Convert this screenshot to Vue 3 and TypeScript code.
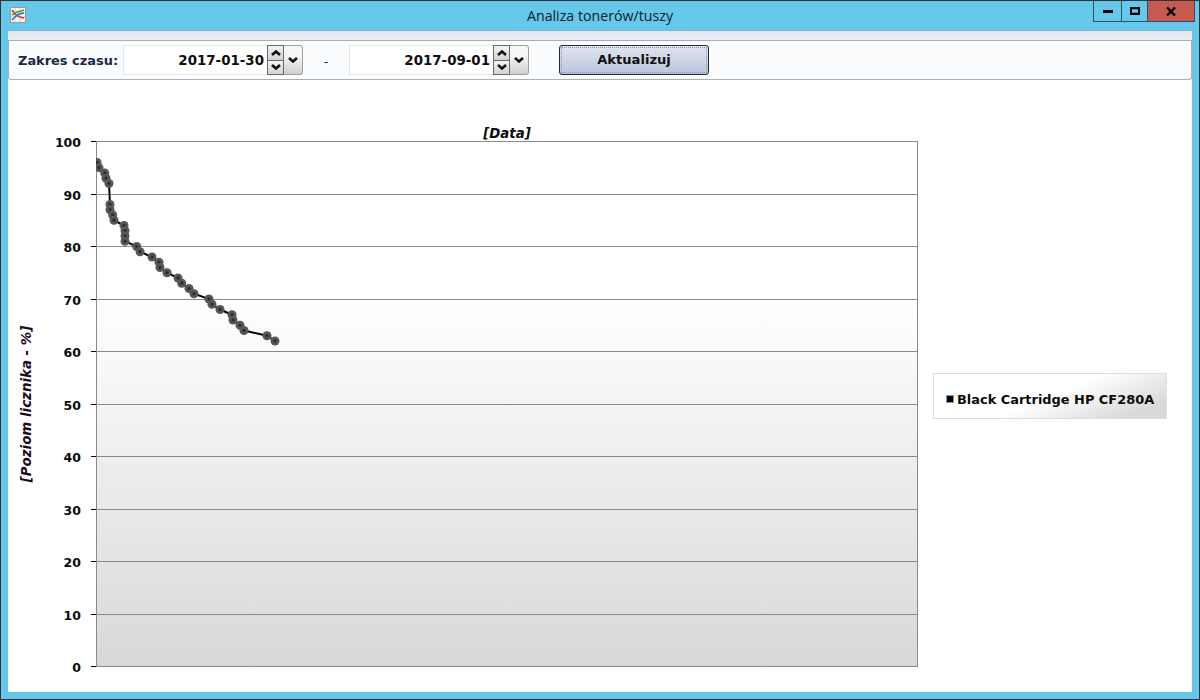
<script setup lang="ts">
const plot = { left: 96, right: 917, top: 141, bottom: 666 }
const ticks = [100, 90, 80, 70, 60, 50, 40, 30, 20, 10, 0]
const yOf = (v: number) => plot.bottom - ((plot.bottom - plot.top) * v) / 100
const gridY = (v: number) => Math.round(yOf(v)) + 0.5

const xs: [number, number][] = [
  [97, 96], [99, 95], [104.7, 94], [106, 93], [109, 92], [110, 88], [110, 87], [112.7, 86], [114, 85],
  [124, 84], [125, 83], [125, 82], [125, 81], [136.7, 80], [140, 79], [152, 78], [159, 77], [160, 76],
  [167, 75], [178, 74], [181.7, 73], [189, 72], [194, 71], [209, 70], [212, 69], [220, 68], [232, 67],
  [233, 66], [240, 65], [244, 64], [267, 63], [275, 62],
]
const points = xs.map(([x, v]) => ({ x, y: yOf(v) + 0.5 }))
const linePoints = points.map((p) => `${p.x},${p.y}`).join(' ')
</script>

<template>
  <div class="window">
    <header class="titlebar">
      <svg class="app-icon" width="16" height="16" viewBox="0 0 16 16">
        <rect x="0.5" y="0.5" width="15" height="15" fill="#f4f4f4" stroke="#9a9a9a" />
        <path d="M5 1v14M10 1v14M1 5h14M1 10h14" stroke="#d0d0d0" stroke-width="1" />
        <path d="M2 3l4 5 4 2 4 1" fill="none" stroke="#c8402c" stroke-width="1.500" />
        <path d="M2 8l5-3 4-1 3-1" fill="none" stroke="#5a9a30" stroke-width="1.500" />
        <path d="M2 13l3-3 4-3 5-1" fill="none" stroke="#2a70c0" stroke-width="1.500" />
      </svg>
      <span class="title">Analiza tonerów/tuszy</span>
      <div class="controls">
        <button class="ctl min" type="button">
          <svg width="10" height="3" viewBox="0 0 10 3"><rect width="10" height="3" fill="#000" /></svg>
        </button>
        <button class="ctl max" type="button">
          <svg width="10" height="8" viewBox="0 0 10 8"><path d="M0 0h10v8H0zM2 2.200v3.600h6V2.200z" fill="#000" fill-rule="evenodd" /></svg>
        </button>
        <button class="ctl close" type="button">
          <svg width="10" height="9" viewBox="0 0 10 9"><path d="M1 .5l8 8M9 .5l-8 8" stroke="#000" stroke-width="2.400" fill="none" /></svg>
        </button>
      </div>
    </header>

    <main class="content">
      <div class="band"></div>
      <div class="toolbar">
        <span class="label">Zakres czasu:</span>

        <div class="date">
          <div class="date-input">2017-01-30</div>
          <div class="spin">
            <span class="spin-btn">
              <svg width="10" height="6" viewBox="0 0 10 6"><path d="M1 5l4-3.500L9 5" fill="none" stroke="#111" stroke-width="2.600" /></svg>
            </span>
            <span class="spin-btn">
              <svg width="10" height="6" viewBox="0 0 10 6"><path d="M1 1l4 3.500L9 1" fill="none" stroke="#111" stroke-width="2.600" /></svg>
            </span>
          </div>
          <div class="drop">
            <svg width="10" height="6" viewBox="0 0 10 6"><path d="M1 1l4 3.500L9 1" fill="none" stroke="#111" stroke-width="2.600" /></svg>
          </div>
        </div>

        <span class="dash">-</span>

        <div class="date">
          <div class="date-input">2017-09-01</div>
          <div class="spin">
            <span class="spin-btn">
              <svg width="10" height="6" viewBox="0 0 10 6"><path d="M1 5l4-3.500L9 5" fill="none" stroke="#111" stroke-width="2.600" /></svg>
            </span>
            <span class="spin-btn">
              <svg width="10" height="6" viewBox="0 0 10 6"><path d="M1 1l4 3.500L9 1" fill="none" stroke="#111" stroke-width="2.600" /></svg>
            </span>
          </div>
          <div class="drop">
            <svg width="10" height="6" viewBox="0 0 10 6"><path d="M1 1l4 3.500L9 1" fill="none" stroke="#111" stroke-width="2.600" /></svg>
          </div>
        </div>

        <button class="update" type="button"><span class="update-inner">Aktualizuj</span></button>
      </div>

      <svg class="chart" width="1184" height="612" viewBox="8 80 1184 612">
        <defs>
          <linearGradient id="plotBg" x1="0" y1="0" x2="0" y2="1">
            <stop offset="0" stop-color="#ffffff" />
            <stop offset="0.3" stop-color="#ffffff" />
            <stop offset="1" stop-color="#d8d8d8" />
          </linearGradient>
          <linearGradient id="legendBg" x1="0" y1="0" x2="1" y2="1" gradientTransform="rotate(-20 .5 .5)">
            <stop offset="0" stop-color="#ffffff" />
            <stop offset="0.5" stop-color="#ffffff" />
            <stop offset="0.85" stop-color="#d9d9d9" />
            <stop offset="1" stop-color="#d9d9d9" />
          </linearGradient>
          <clipPath id="plotClip">
            <rect :x="plot.left" :y="plot.top" :width="plot.right - plot.left" :height="plot.bottom - plot.top" />
          </clipPath>
          <radialGradient id="dot">
            <stop offset="0" stop-color="#1c1c1c" />
            <stop offset="0.25" stop-color="#333" />
            <stop offset="0.5" stop-color="#575757" />
            <stop offset="1" stop-color="#575757" />
          </radialGradient>
        </defs>

        <rect :x="plot.left" :y="plot.top" :width="plot.right - plot.left" :height="plot.bottom - plot.top" fill="url(#plotBg)" />
        <g v-for="t in ticks" :key="t">
          <line :x1="plot.left" :x2="plot.right" :y1="gridY(t)" :y2="gridY(t)" class="grid" />
          <line :x1="plot.left - 5" :x2="plot.left" :y1="gridY(t)" :y2="gridY(t)" class="tick" />
          <text :x="plot.left - 15" :y="gridY(t) + 5.500" class="tick-label" text-anchor="end">{{ t }}</text>
        </g>
        <rect :x="plot.left + 0.5" :y="plot.top + 0.5" :width="plot.right - plot.left" :height="plot.bottom - plot.top" class="plot-frame" />

        <g clip-path="url(#plotClip)">
          <polyline :points="linePoints" class="series" />
          <circle v-for="(p, i) in points" :key="i" :cx="p.x" :cy="p.y" r="4.500" fill="url(#dot)" />
        </g>

        <text x="507" y="138" class="axis-title" text-anchor="middle">[Data]</text>
        <text x="0" y="0" class="axis-title axis-y" text-anchor="middle" transform="translate(31 404) rotate(-90)">[Poziom licznika - %]</text>

        <rect x="933.500" y="373.500" width="233" height="45" fill="url(#legendBg)" stroke="#dedede" />
        <rect x="946.500" y="395.500" width="7" height="7" fill="#000" stroke="#999" />
        <text x="957" y="404" class="legend-text">Black Cartridge HP CF280A</text>
      </svg>
    </main>
  </div>
</template>

<style>
html,
body {
  margin: 0;
  padding: 0;
}
</style>

<style scoped>
.window {
  box-sizing: border-box;
  width: 1200px;
  height: 700px;
  border: 1px solid #333;
  background: #65c8ea;
  display: flex;
  flex-direction: column;
  overflow: hidden;
}
.titlebar {
  flex: none;
  height: 30px;
  display: grid;
  grid-template-columns: 1fr auto 1fr;
  align-items: start;
}
.app-icon {
  margin: 6px 0 0 9px;
}
.title {
  font-family: "Open Sans", sans-serif;
  font-size: 14.200px;
  line-height: 18px;
  margin-top: 6px;
  color: #10202c;
}
.controls {
  justify-self: end;
  margin-right: 4px;
  display: flex;
  height: 21px;
  box-sizing: border-box;
  border: 1px solid #2f4f63;
  border-top: none;
}
.ctl {
  padding: 0;
  height: 20px;
  border: none;
  background: transparent;
  display: flex;
  align-items: center;
  justify-content: center;
}
.min {
  width: 27px;
  border-right: 1px solid #2f4f63;
  box-sizing: content-box;
}
.max {
  width: 25px;
  border-right: 1px solid #2f4f63;
  box-sizing: content-box;
}
.close {
  width: 46px;
  background: #c65a50;
}
.content {
  flex: 1;
  margin: 0 7px 7px;
  background: #fff;
  display: flex;
  flex-direction: column;
  box-shadow: 0 -1px 0 #7fb6cf;
  min-height: 0;
}
.band {
  flex: none;
  height: 9px;
  background: linear-gradient(#e0e5ee, #eaedf4);
  border-bottom: 1px solid #a5afb9;
}
.toolbar {
  flex: none;
  box-sizing: border-box;
  height: 39px;
  padding: 4px 0 0 9px;
  display: flex;
  align-items: flex-start;
  background: #fbfcfe;
  border: 1px solid #a9b0b7;
  border-top: none;
  border-radius: 0 0 3px 3px;
  font-family: "DejaVu Sans", sans-serif;
  font-weight: 700;
  font-size: 13px;
  color: #101010;
}
.label {
  width: 105px;
  line-height: 31px;
  font-size: 12.950px;
  color: #1b2747;
}
.date {
  display: flex;
  height: 30px;
  width: 180px;
}
.date-input {
  box-sizing: border-box;
  width: 144px;
  height: 30px;
  line-height: 29px;
  text-align: right;
  padding-right: 3px;
  background: #fff;
  border: 1px solid #e3e7ec;
  border-right: none;
  font-size: 13.400px;
}
.spin {
  box-sizing: border-box;
  width: 17px;
  height: 30px;
  border: 1px solid #6a6a6a;
  display: flex;
  flex-direction: column;
  background: #6a6a6a;
  gap: 1px;
}
.spin-btn {
  flex: 1;
  display: flex;
  align-items: center;
  justify-content: center;
  background: linear-gradient(#f4f4f4, #d2d2d2);
}
.drop {
  box-sizing: border-box;
  width: 19px;
  height: 30px;
  border: 1px solid #a0a0a0;
  border-left: none;
  border-radius: 0 3px 3px 0;
  background: linear-gradient(#f6f6f6 35%, #cfcfcf);
  display: flex;
  align-items: center;
  justify-content: center;
}
.dash {
  width: 46px;
  text-align: center;
  line-height: 33px;
  font-weight: 400;
  color: #123f52;
}
.update {
  margin-left: 30px;
  box-sizing: border-box;
  width: 150px;
  height: 30px;
  padding: 1px;
  border: 1px solid #23282f;
  border-radius: 3px;
  background: linear-gradient(#e0e6f0, #b8c5da);
  font: inherit;
  font-size: 13.100px;
  color: #101010;
}
.update-inner {
  box-sizing: border-box;
  display: block;
  height: 100%;
  line-height: 24px;
  border: 1px dotted #8d96a6;
}
.chart {
  display: block;
  flex: none;
}
.grid {
  stroke: #8a8a8a;
  stroke-width: 1;
}
.tick {
  stroke: #000;
  stroke-width: 1;
}
.plot-frame {
  fill: none;
  stroke: #8a8a8a;
  stroke-width: 1;
}
.series {
  fill: none;
  stroke: #000;
  stroke-width: 2;
}
.tick-label,
.legend-text,
.axis-title {
  font-family: "DejaVu Sans", sans-serif;
  font-weight: 700;
  fill: #0c0c0c;
}
.tick-label {
  font-size: 12.500px;
}
.legend-text {
  font-size: 12.930px;
}
.axis-title {
  font-size: 13.300px;
  font-style: italic;
}
.axis-y {
  font-size: 13.400px;
  fill: #1c0a24;
}
</style>
